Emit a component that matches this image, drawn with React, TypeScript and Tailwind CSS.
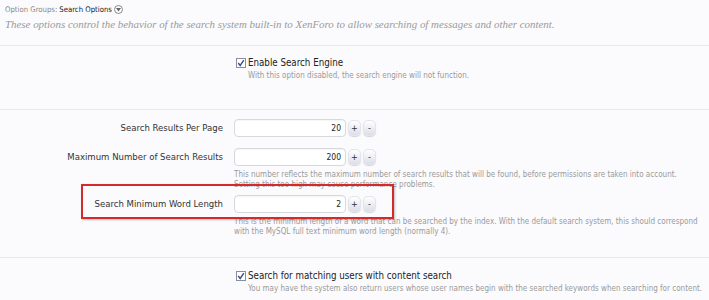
import React from "react";

const sans = "font-['Tahoma','DejaVu_Sans_Condensed','Liberation_Sans',sans-serif]";

const CheckBox: React.FC = () => (
  <svg width="10" height="10" viewBox="0 0 10 10" className="shrink-0">
    <rect x="0.5" y="0.5" width="9" height="9" fill="#fff" stroke="#8a8f99" />
    <path d="M2.2 5 L4.2 7.5 L7.8 2.2" fill="none" stroke="#3a4f8a" strokeWidth="1.4" />
  </svg>
);

const StepButton: React.FC<{ sign: string }> = ({ sign }) => (
  <div className="w-[13px] h-[16px] rounded-[5px] bg-gradient-to-b from-white to-[#dcdfe7] border border-[#e2e4ea] shadow-[0_1px_1px_rgba(0,0,0,0.15)] flex items-center justify-center text-[9px] leading-none text-[#333]">
    {sign}
  </div>
);

const Spinner: React.FC<{ value: string }> = ({ value }) => (
  <div className="flex items-center gap-[2px]">
    <div className="w-[112px] h-[18px] bg-white border border-[#d6d8de] rounded-[4px] shadow-[inset_0_1px_1px_rgba(0,0,0,0.04)] flex items-center justify-end pr-[4px] text-[8.5px] text-[#222]">
      {value}
    </div>
    <StepButton sign="+" />
    <StepButton sign="-" />
  </div>
);

const Row: React.FC<{ label: string; value: string; hint?: string[]; boxed?: boolean }> = ({
  label,
  value,
  hint,
  boxed,
}) => (
  <div className="relative flex">
    <div className="w-[223px] shrink-0 h-[18px] flex items-center justify-end text-[9.5px] text-[#333]">{label}</div>
    <div className="ml-[11px] flex flex-col">
      <Spinner value={value} />
      {hint && (
        <div className="mt-[4px] text-[8px] leading-[10px] text-[#9a9a9a] whitespace-nowrap">
          {hint.map((line, i) => (
            <div key={i}>{line}</div>
          ))}
        </div>
      )}
    </div>
    {boxed && (
      <div className="absolute left-[81px] top-[-11px] w-[313px] h-[35px] border-2 border-[#d42a2a] shadow-[1px_1px_2px_rgba(0,0,0,0.25)]" />
    )}
  </div>
);

const CheckRow: React.FC<{ label: string; hint: string }> = ({ label, hint }) => (
  <div className="pl-[236px]">
    <div className="flex items-center gap-[2px] h-[14px]">
      <CheckBox />
      <span className="text-[9.7px] text-[#222]">{label}</span>
    </div>
    <div className="pl-[12px] text-[8px] leading-[12px] text-[#9a9a9a] whitespace-nowrap">{hint}</div>
  </div>
);

export default function App() {
  return (
    <div className={`w-[709px] h-[300px] overflow-hidden bg-[#fbfbfd] ${sans}`}>
      <div className="px-[5px] pt-[3px] h-[46px] border-b border-[#e3eaec]">
        <div className="flex items-center h-[13px] text-[7.7px]">
          <span className="text-[#888]">Option Groups:</span>
          <span className="ml-[2px] text-[#222]">Search Options</span>
          <span className="ml-[2px] w-[9px] h-[9px] rounded-full border border-[#888] flex items-center justify-center">
            <svg width="5" height="4" viewBox="0 0 5 4">
              <path d="M0 0 L5 0 L2.5 3.5 Z" fill="#666" />
            </svg>
          </span>
        </div>
        <div className="mt-[2px] font-['Liberation_Serif',serif] italic text-[10.9px] leading-[13px] text-[#9a9a9a]">
          These options control the behavior of the search system built-in to XenForo to allow searching of messages and other content.
        </div>
      </div>

      <div className="h-[64px] pt-[10px] border-b border-[#e3eaec]">
        <CheckRow label="Enable Search Engine" hint="With this option disabled, the search engine will not function." />
      </div>

      <div className="h-[148px] pt-[9px] border-b border-[#e3eaec] flex flex-col">
        <Row label="Search Results Per Page" value="20" />
        <div className="h-[11px]" />
        <Row
          label="Maximum Number of Search Results"
          value="200"
          hint={[
            "This number reflects the maximum number of search results that will be found, before permissions are taken into account.",
            "Setting this too high may cause performance problems.",
          ]}
        />
        <div className="h-[5px]" />
        <Row
          label="Search Minimum Word Length"
          value="2"
          boxed
          hint={[
            "This is the minimum length of a word that can be searched by the index. With the default search system, this should correspond",
            "with the MySQL full text minimum word length (normally 4).",
          ]}
        />
      </div>

      <div className="pt-[11px]">
        <CheckRow
          label="Search for matching users with content search"
          hint="You may have the system also return users whose user names begin with the searched keywords when searching for content."
        />
      </div>
    </div>
  );
}
